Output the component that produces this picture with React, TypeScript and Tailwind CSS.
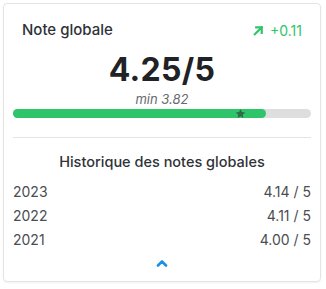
import React from 'react';

const history = [
  { year: '2023', note: '4.14 / 5' },
  { year: '2022', note: '4.11 / 5' },
  { year: '2021', note: '4.00 / 5' },
];

export default function App() {
  const pct = 85;
  return (
    <div className="w-[326px] h-[289px] bg-white p-[3px] pr-[5px] pb-[7px]" style={{ fontFamily: 'Inter, "Noto Sans", sans-serif' }}>
      <div className="h-full rounded-[4px] border border-[#e4e4e4] shadow-[0_1px_2px_rgba(0,0,0,0.06)] px-[9px] pt-[15px]">
        <div className="flex items-center justify-between px-[9px]">
          <span className="text-[15px] font-medium text-[#2f3237]">Note globale</span>
          <span className="flex items-center gap-[6px] text-[14px] text-[#2ec56a]">
            <svg width="11" height="11" viewBox="0 0 12 12" fill="none" stroke="#2ec56a" strokeWidth="2.4" strokeLinecap="square">
              <path d="M2 10L9.5 2.5" />
              <path d="M3.5 2.5H9.5V8.5" />
            </svg>
            +0.11
          </span>
        </div>
        <div className="mt-[9px] text-center text-[32px] leading-[38px] font-bold text-[#202225] tracking-[0.3px]">4.25/5</div>
        <div className="mt-[3px] text-center text-[13px] leading-[15px] italic text-[#666a70]">min 3.82</div>
        <div className="relative mt-[2px] h-[9px] rounded-full bg-[#dedede]">
          <div className="h-full rounded-full bg-[#2ec56a]" style={{ width: `${pct}%` }} />
          <svg className="absolute left-[222px] top-[-1px]" width="11" height="11" viewBox="0 0 24 24" fill="#2f6b47">
            <path d="M12 2l3 6.9 7.5.7-5.7 5 1.7 7.4L12 18.2 5.5 22l1.7-7.4-5.7-5 7.5-.7z" />
          </svg>
        </div>
        <div className="mt-[19px] h-px bg-[#e4e4e4]" />
        <div className="mt-[13px] text-center text-[14.5px] font-medium text-[#2f3237]">Historique des notes globales</div>
        <div className="mt-[7px] flex flex-col">
          {history.map((h) => (
            <div key={h.year} className="flex justify-between h-[24px] items-center text-[14px] text-[#4a4d52]">
              <span>{h.year}</span>
              <span>{h.note}</span>
            </div>
          ))}
        </div>
        <div className="mt-[8px] flex justify-center">
          <svg width="12" height="8" viewBox="0 0 12 8" fill="none" stroke="#1e90e0" strokeWidth="2.6" strokeLinecap="round" strokeLinejoin="round">
            <path d="M2 6.5L6 2.5L10 6.5" />
          </svg>
        </div>
      </div>
    </div>
  );
}
